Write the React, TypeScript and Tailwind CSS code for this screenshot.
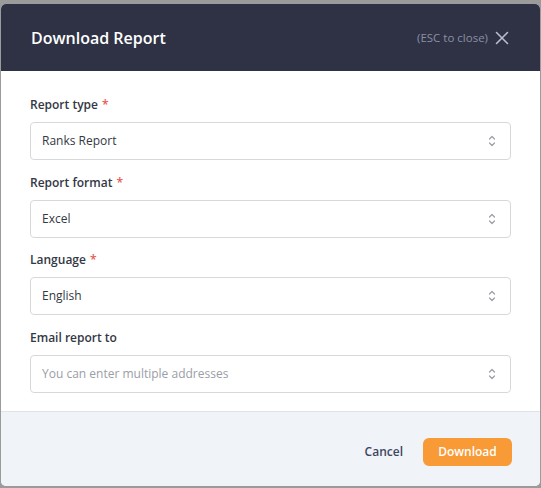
import React from 'react'

const fields = [
  { label: 'Report type', required: true, value: 'Ranks Report', placeholder: false },
  { label: 'Report format', required: true, value: 'Excel', placeholder: false },
  { label: 'Language', required: true, value: 'English', placeholder: false },
  { label: 'Email report to', required: false, value: 'You can enter multiple addresses', placeholder: true },
]

function UpDown() {
  return (
    <svg width="8" height="12" viewBox="0 0 8 12" fill="none" stroke="#9a9ea6" strokeWidth="1.2" strokeLinecap="round" strokeLinejoin="round">
      <path d="M1.5 4 L4 1.5 L6.5 4" />
      <path d="M1.5 8 L4 10.5 L6.5 8" />
    </svg>
  )
}

export default function App() {
  return (
    <div className="w-[541px] h-[488px] bg-[#9b9b9b] pt-[4px] pl-[1px] pr-[1px] pb-[2px] font-['Open_Sans',sans-serif]">
      <div className="w-full h-full flex flex-col rounded-[5px] overflow-hidden bg-white">
        {/* header */}
        <div className="h-[67px] shrink-0 bg-[#2f3245] flex items-center justify-between pl-[30px] pr-[31px]">
          <h1 className="text-[16px] font-semibold text-white leading-none">Download Report</h1>
          <div className="flex items-center gap-[7px]">
            <span className="text-[11.5px] text-[#8b8fa3]">(ESC to close)</span>
            <svg width="14" height="14" viewBox="0 0 14 14" stroke="#b9bccb" strokeWidth="1.6" strokeLinecap="round">
              <path d="M1.5 1.5 L12.5 12.5 M12.5 1.5 L1.5 12.5" />
            </svg>
          </div>
        </div>

        {/* body */}
        <div className="flex-1 pt-[25px] px-[29px] flex flex-col gap-[13.5px]">
          {fields.map((f) => (
            <div key={f.label} className="flex flex-col">
              <label className="h-[18px] mb-[8px] flex items-center text-[12px] font-semibold text-[#333844]">
                {f.label}
                {f.required && <span className="ml-[4px] text-[#e8584f]">*</span>}
              </label>
              <div className="h-[38px] border border-[#d6d8dc] rounded-[4px] flex items-center justify-between pl-[11px] pr-[14px]">
                <span className={`text-[12px] ${f.placeholder ? 'text-[#9a9ea6]' : 'text-[#333844]'}`}>{f.value}</span>
                <UpDown />
              </div>
            </div>
          ))}
        </div>

        {/* footer */}
        <div className="h-[75px] shrink-0 bg-[#f0f3f7] border-t border-[#dfe2e7] flex items-center justify-end gap-[20px] pr-[28px] pt-[6px]">
          <button className="text-[12px] font-semibold text-[#3c465f]">Cancel</button>
          <button className="w-[89px] h-[28px] rounded-[6px] bg-[#f89a35] text-white text-[12px] font-semibold">Download</button>
        </div>
      </div>
    </div>
  )
}
